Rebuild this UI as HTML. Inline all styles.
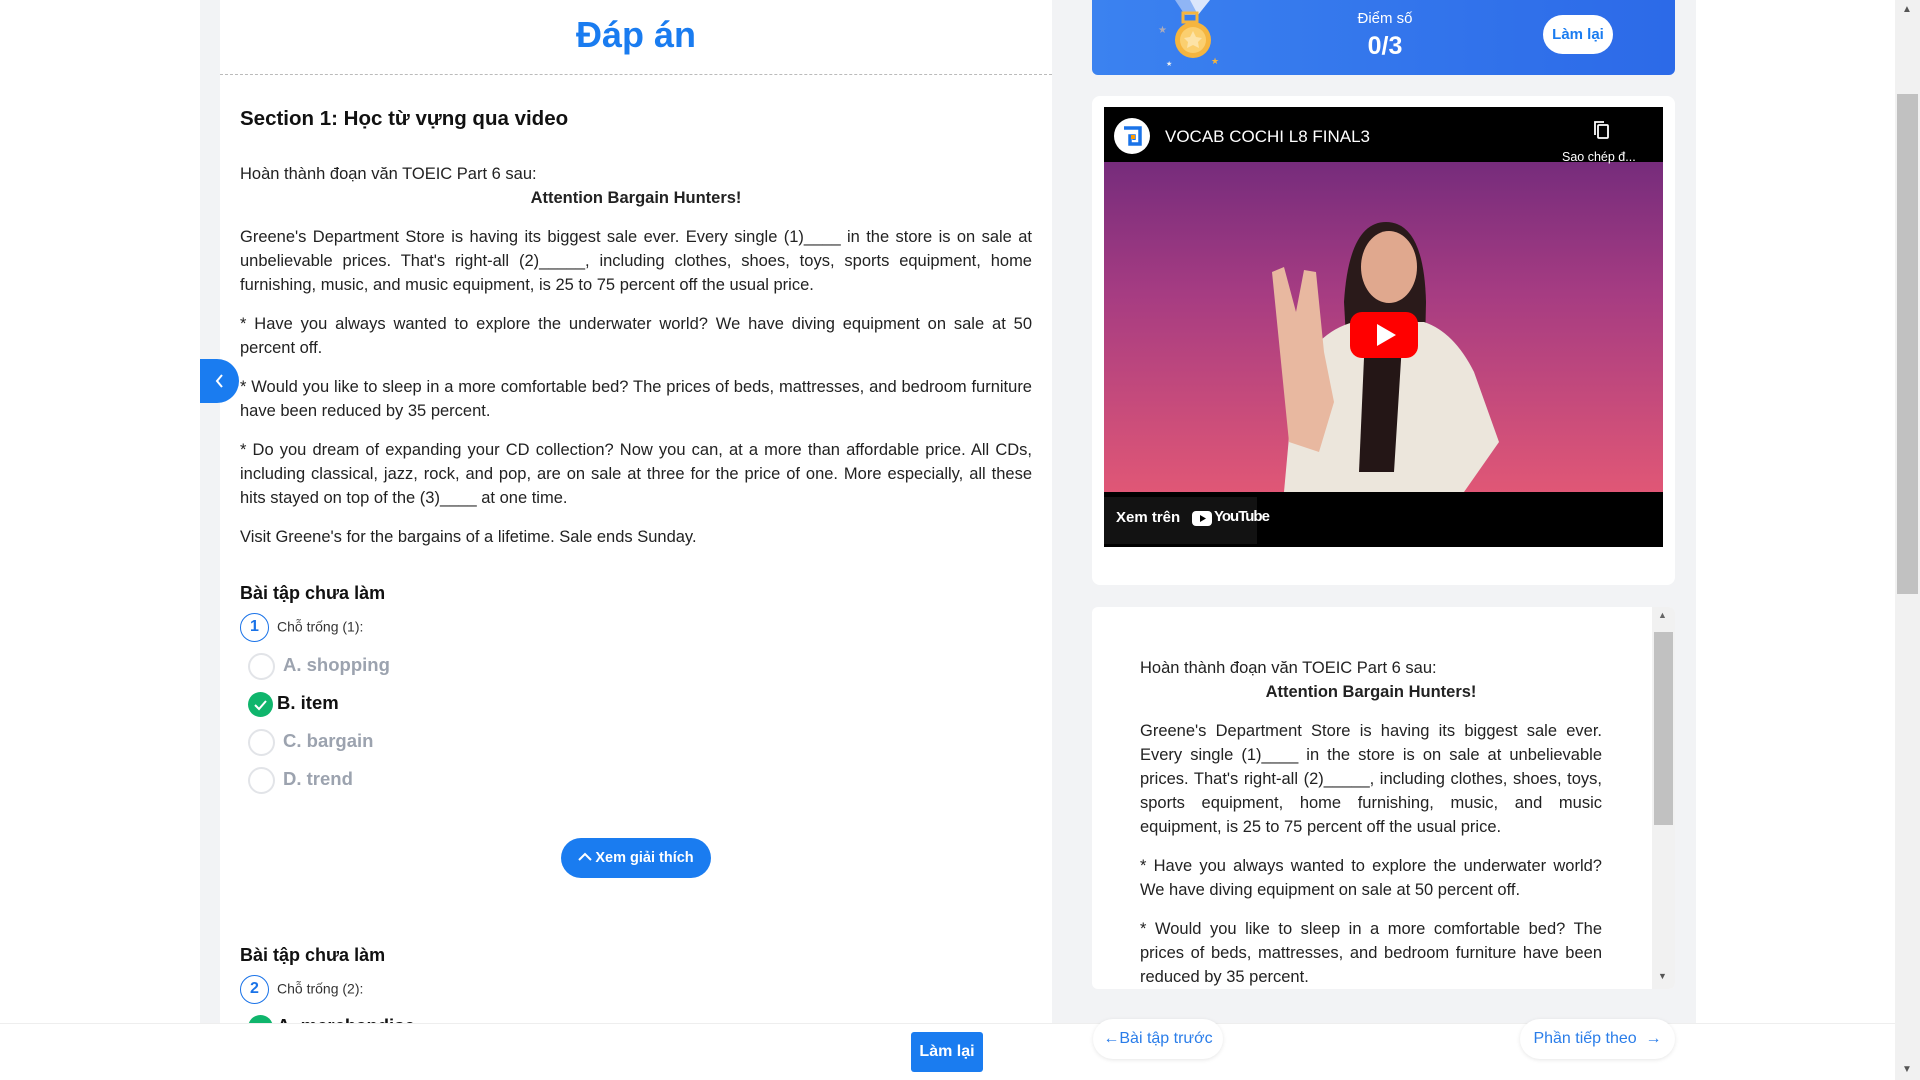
<!DOCTYPE html>
<html><head><meta charset="utf-8"><style>
*{box-sizing:border-box;margin:0;padding:0}
body{width:1920px;height:1080px;overflow:hidden;background:#fff;font-family:"Liberation Sans",Arial,sans-serif;color:#1f1f1f;position:relative}
.abs{position:absolute}
.txt{font-size:16.5px;line-height:24px;text-align:justify;color:#222}
.txt p{margin-bottom:15px}
.ctr{text-align:center;font-weight:bold}
.opt{position:absolute;left:248px;font-size:18.5px;font-weight:bold;color:#9ca3af;height:28px;line-height:28px}
.opt .r{display:inline-block;width:27px;height:27px;border:2px solid #e2e4e8;border-radius:50%;vertical-align:middle;margin-right:8px}
.num{display:inline-block;width:29px;height:29px;border:1.5px solid #1a73e8;border-radius:50%;color:#1a73e8;text-align:center;line-height:26px;font-size:16px;font-weight:bold;vertical-align:middle;margin-right:8px}
.q{font-size:14px;color:#333}
h3{font-size:18px;font-weight:bold;color:#111}
</style></head><body>
<div class="abs" style="left:200px;top:0;width:1496px;height:1023px;background:#f2f3f5"></div>
<div class="abs" style="left:220px;top:0;width:832px;height:1023px;background:#fff"></div>
<div class="abs" style="left:1895px;top:0;width:25px;height:1080px;background:#f1f1f1"></div>
<div class="abs" style="left:1897px;top:94px;width:21px;height:500px;background:#c1c1c1"></div>
<div class="abs" style="left:1902px;top:4px;font-size:10px;color:#555">▲</div>
<div class="abs" style="left:1902px;top:1064px;font-size:10px;color:#555">▼</div>

<div class="abs" style="left:220px;top:14px;width:832px;text-align:center;font-size:36px;font-weight:bold;color:#1a7cf0">Đáp án</div>
<div class="abs" style="left:220px;top:74px;width:832px;border-top:1.5px dashed #bbb"></div>
<div class="abs" style="left:240px;top:107px;font-size:20.5px;font-weight:bold;color:#111">Section 1: Học từ vựng qua video</div>

<div class="abs txt" style="left:240px;top:162px;width:792px">
<div>Hoàn thành đoạn văn TOEIC Part 6 sau:</div>
<div class="ctr" style="margin-bottom:15px">Attention Bargain Hunters!</div>
<p>Greene's Department Store is having its biggest sale ever. Every single (1)____ in the store is on sale at unbelievable prices. That's right-all (2)_____, including clothes, shoes, toys, sports equipment, home furnishing, music, and music equipment, is 25 to 75 percent off the usual price.</p>
<p>* Have you always wanted to explore the underwater world? We have diving equipment on sale at 50 percent off.</p>
<p>* Would you like to sleep in a more comfortable bed? The prices of beds, mattresses, and bedroom furniture have been reduced by 35 percent.</p>
<p>* Do you dream of expanding your CD collection? Now you can, at a more than affordable price. All CDs, including classical, jazz, rock, and pop, are on sale at three for the price of one. More especially, all these hits stayed on top of the (3)____ at one time.</p>
<p>Visit Greene's for the bargains of a lifetime. Sale ends Sunday.</p>
</div>

<div class="abs" style="left:200px;top:359px;width:39px;height:44px;background:#1a7cf0;border-radius:0 22px 22px 0"><svg width="39" height="44"><path d="M22 16l-5 6 5 6" stroke="#fff" stroke-width="2" fill="none"/></svg></div>

<h3 class="abs" style="left:240px;top:583px">Bài tập chưa làm</h3>
<div class="abs" style="left:240px;top:613px"><span class="num">1</span><span class="q">Chỗ trống (1):</span></div>
<div class="opt" style="top:651px"><span class="r"></span>A. shopping</div>
<div class="opt" style="top:689px;color:#111;left:248px"><svg width="25" height="25" style="vertical-align:middle;margin-right:4px"><circle cx="12.5" cy="12.5" r="12.5" fill="#0fb56c"/><path d="M7 13l4 4 7-8" stroke="#fff" stroke-width="2" fill="none"/></svg>B. item</div>
<div class="opt" style="top:727px"><span class="r"></span>C. bargain</div>
<div class="opt" style="top:765px"><span class="r"></span>D. trend</div>
<div class="abs" style="left:561px;top:838px;width:150px;height:40px;background:#1a7cf0;border-radius:20px;color:#fff;font-size:14.5px;font-weight:bold;text-align:center;line-height:40px"><svg width="14" height="10" style="margin-right:3px"><path d="M1 8l6-6 6 6" stroke="#fff" stroke-width="2" fill="none"/></svg>Xem giải thích</div>
<h3 class="abs" style="left:240px;top:945px">Bài tập chưa làm</h3>
<div class="abs" style="left:240px;top:975px"><span class="num">2</span><span class="q">Chỗ trống (2):</span></div>
<div class="opt" style="top:1012px;color:#111"><svg width="25" height="25" style="vertical-align:middle;margin-right:4px"><circle cx="12.5" cy="12.5" r="12.5" fill="#0fb56c"/></svg>A. merchandise</div>

<!-- score card -->
<div class="abs" style="left:1092px;top:0;width:583px;height:75px;border-radius:0 0 6px 6px;background:linear-gradient(90deg,#3b82f0,#2c6ae8)"></div>
<svg class="abs" style="left:1150px;top:0" width="80" height="70"><path d="M25 0l10 15h10l10-15z" fill="#8fb5f5"/><path d="M40 0h20l-12 15z" fill="#dbe6fb"/><rect x="33" y="13" width="14" height="9" fill="none" stroke="#f5b53f" stroke-width="3"/><circle cx="43" cy="40" r="18" fill="#f5b53f"/><circle cx="43" cy="40" r="13" fill="#fbcf6f"/><path d="M43 31l3 6 6 1-4 4 1 6-6-3-6 3 1-6-4-4 6-1z" fill="#fde3a7"/><text x="8" y="33" font-size="10" fill="#aab">★</text><text x="16" y="66" font-size="7" fill="#eee">★</text><text x="61" y="64" font-size="9" fill="#f5b53f">★</text></svg>
<div class="abs" style="left:1325px;top:10px;width:120px;text-align:center;color:#fff;font-size:15px">Điểm số</div>
<div class="abs" style="left:1325px;top:32px;width:120px;text-align:center;color:#fff;font-size:25px;font-weight:bold">0/3</div>
<div class="abs" style="left:1543px;top:15px;width:70px;height:39px;border-radius:20px;background:#fff;color:#1a7cf0;font-weight:bold;font-size:15px;text-align:center;line-height:39px">Làm lại</div>

<!-- video card -->
<div class="abs" style="left:1092px;top:96px;width:583px;height:489px;background:#fff;border-radius:8px"></div>
<div class="abs" style="left:1104px;top:107px;width:559px;height:440px;background:#000;overflow:hidden">
 <div class="abs" style="left:0;top:55px;width:559px;height:330px;background:linear-gradient(#762c7c,#a63c82 40%,#e05776)"></div>
 <svg class="abs" style="left:0;top:55px" width="559" height="330">
  <path d="M240 140 Q245 60 282 60 Q320 60 322 140 L318 320 L250 320z" fill="#2a1a1a"/>
  <ellipse cx="285" cy="105" rx="28" ry="36" fill="#e0a88e"/>
  <path d="M180 330 L190 220 Q210 170 250 160 L320 160 Q350 170 370 210 L395 280 L360 330z" fill="#ece6dc"/>
  <path d="M262 150 L255 310 L290 310 L300 150z" fill="#241616"/>
  <path d="M185 280 L168 110 L180 105 L192 150 L200 108 L212 110 L220 190 L230 240 L215 290z" fill="#e8b8a0"/>
  <rect x="246" y="150" width="68" height="46" rx="12" fill="#f00"/>
  <path d="M273 162 L273 184 L292 173z" fill="#fff"/>
 </svg>
 <div class="abs" style="left:10px;top:11px;width:36px;height:36px;border-radius:50%;background:#fff"><svg width="36" height="36"><path d="M10 10h16v16h-10v-8h4v4" stroke="#1a73e8" stroke-width="3.5" fill="none"/><rect x="17" y="17" width="4" height="4" fill="#f90"/></svg></div>
 <div class="abs" style="left:61px;top:20px;color:#fff;font-size:17px">VOCAB COCHI L8 FINAL3</div>
 <svg class="abs" style="left:488px;top:13px" width="20" height="22"><rect x="6" y="5" width="10" height="13" rx="1" fill="none" stroke="#fff" stroke-width="1.8"/><path d="M3 15V2h9" fill="none" stroke="#fff" stroke-width="1.8"/></svg>
 <div class="abs" style="left:458px;top:43px;color:#fff;font-size:12.5px">Sao chép đ...</div>
 <div class="abs" style="left:0;top:390px;width:153px;height:47px;background:#121212"></div>
 <div class="abs" style="left:12px;top:402px;color:#fff;font-size:15px;font-weight:bold">Xem trên</div>
 <div class="abs" style="left:88px;top:404px;width:20px;height:15px;background:#fff;border-radius:4px"><svg width="20" height="15"><path d="M8 4v7l6-3.5z" fill="#000"/></svg></div>
 <div class="abs" style="left:110px;top:401px;color:#fff;font-size:15px;font-weight:bold;letter-spacing:-1px">YouTube</div>
</div>

<!-- text card -->
<div class="abs" style="left:1092px;top:607px;width:583px;height:382px;background:#fff;border-radius:6px;overflow:hidden">
 <div class="abs" style="left:560px;top:0;width:23px;height:382px;background:#f1f1f1"></div>
 <div class="abs" style="left:562px;top:25px;width:19px;height:193px;background:#c1c1c1"></div>
 <div class="abs" style="left:566px;top:3px;font-size:9px;color:#666">▲</div>
 <div class="abs" style="left:566px;top:364px;font-size:9px;color:#555">▼</div>
 <div class="abs txt" style="left:48px;top:49px;width:462px">
 <div>Hoàn thành đoạn văn TOEIC Part 6 sau:</div>
 <div class="ctr" style="margin-bottom:15px">Attention Bargain Hunters!</div>
 <p>Greene's Department Store is having its biggest sale ever. Every single (1)____ in the store is on sale at unbelievable prices. That's right-all (2)_____, including clothes, shoes, toys, sports equipment, home furnishing, music, and music equipment, is 25 to 75 percent off the usual price.</p>
 <p>* Have you always wanted to explore the underwater world? We have diving equipment on sale at 50 percent off.</p>
 <p>* Would you like to sleep in a more comfortable bed? The prices of beds, mattresses, and bedroom furniture have been reduced by 35 percent.</p>
 </div>
</div>

<!-- bottom bar -->
<div class="abs" style="left:0;top:1023px;width:1895px;height:57px;background:#fff;border-top:1px solid #eee"></div>
<div class="abs" style="left:911px;top:1032px;width:72px;height:40px;background:#1a7cf0;border-radius:3px;color:#fff;font-weight:bold;font-size:16px;text-align:center;line-height:40px">Làm lại</div>
<div class="abs" style="left:1093px;top:1019px;width:130px;height:40px;border-radius:20px;background:#fff;box-shadow:0 1px 4px rgba(0,0,0,.1);color:#2a7de9;font-size:16px;line-height:40px;text-align:center">←Bài tập trước</div>
<div class="abs" style="left:1520px;top:1019px;width:155px;height:40px;border-radius:20px;background:#fff;box-shadow:0 1px 4px rgba(0,0,0,.1);color:#2a7de9;font-size:16px;line-height:40px;text-align:center">Phần tiếp theo &nbsp;<b>→</b></div>
</body></html>
